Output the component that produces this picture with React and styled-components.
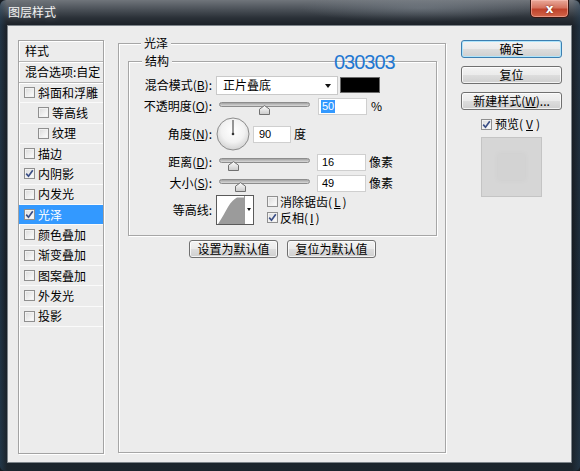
import React from "react";
import styled, { createGlobalStyle } from "styled-components";

const GlobalStyle = createGlobalStyle`
  html, body { margin: 0; padding: 0; background: #161b21; }
  body { width: 580px; height: 471px; overflow: hidden; }
  * { box-sizing: border-box; }
`;

const FONT = `"Noto Sans CJK SC", "Noto Sans", sans-serif`;

const Window = styled.div`
  width: 580px;
  height: 471px;
  display: flex;
  flex-direction: column;
  border-radius: 6px 6px 5px 5px;
  overflow: hidden;
  background:
    linear-gradient(90deg, rgba(40,70,95,0.55) 0px, rgba(0,0,0,0) 7px, rgba(0,0,0,0) 572px, rgba(40,70,95,0.45) 580px),
    linear-gradient(180deg, #70757b 0px, #50565d 8px, #2a3037 18px, #1b2027 26px, #161b21 60%, #1c252d 100%);
  font-family: ${FONT};
  font-size: 12px;
  color: #000;
`;

const TitleBar = styled.div`
  height: 25px;
  display: flex;
  align-items: flex-start;
  padding: 0 11px 0 8px;
  background: radial-gradient(ellipse 120px 14px at 420px 8px, rgba(150,160,170,0.35), rgba(0,0,0,0));
`;

const Title = styled.div`
  margin-top: 5px;
  color: #f4f4f4;
  font-size: 12px;
  line-height: 14px;
  text-shadow: 0 0 6px rgba(255,255,255,0.35);
`;

const CloseButton = styled.div`
  margin-left: auto;
  width: 39px;
  height: 18px;
  border: 1px solid #3a1712;
  border-top: none;
  border-radius: 0 0 5px 5px;
  background: linear-gradient(180deg, #e9a99a 0%, #d5735f 45%, #c0432c 55%, #d3664a 100%);
  box-shadow: inset 0 0 0 1px rgba(255,200,190,0.5);
  display: flex;
  align-items: center;
  justify-content: center;
  color: #fff;
  font-family: "DejaVu Sans", sans-serif;
  font-weight: bold;
  font-size: 12px;
  text-shadow: 0 0 2px #5a1a10;
`;

const Client = styled.div`
  flex: 1;
  margin: 0 8px 8px 7px;
  border: 1px solid #7d848a;
  background: #ececec;
  display: flex;
  padding: 14px 9px 8px 10px;
`;

/* ---------- left style list ---------- */
const StyleList = styled.div`
  width: 86px;
  flex: none;
  border: 1px solid #a3a3a3;
  box-shadow: 1px 1px 0 #fff, inset 1px 1px 0 #fff;
  display: flex;
  flex-direction: column;
`;

const ListHeader = styled.div`
  height: 21px;
  padding-left: 6px;
  display: flex;
  align-items: center;
  border-bottom: 1px solid #b5b5b5;
  box-shadow: 0 1px 0 #fff;
  white-space: nowrap;
  line-height: 14px;
`;

const ListItem = styled.div`
  height: 20.33px;
  display: flex;
  align-items: center;
  gap: 3px;
  padding-left: ${(p) => (p.$indent ? 19 : 5)}px;
  border-bottom: 1px solid #fafafa;
  background: ${(p) => (p.$active ? "#3399ff" : "transparent")};
  color: ${(p) => (p.$active ? "#fff" : "#000")};
  white-space: nowrap;
  line-height: 14px;
`;

const Box = styled.span`
  width: 11px;
  height: 11px;
  flex: none;
  border: 1px solid #8f8f8f;
  background: linear-gradient(135deg, #dadada 0%, #f4f4f4 70%, #ffffff 100%);
  box-shadow: inset 0 0 0 1px #f2f2f2;
  display: flex;
  align-items: center;
  justify-content: center;
`;

const Check = ({ on }) => (
  <Box>
    {on && (
      <svg width="9" height="9" viewBox="0 0 9 9">
        <path d="M1.2 4.6 L3.5 7.2 L7.8 1.2" fill="none" stroke="#3b4f86" strokeWidth="1.7" />
      </svg>
    )}
  </Box>
);

/* ---------- group boxes ---------- */
const GroupBox = styled.div`
  position: relative;
  border: 1px solid #a6a6a6;
  box-shadow: 1px 1px 0 #fff, inset 1px 1px 0 #fff;
  display: flex;
  flex-direction: column;
`;

const OuterGroup = styled(GroupBox)`
  width: 328px;
  flex: none;
  margin: 3px 15px 1px 14px;
  padding: 0 8px 0 9px;
`;

const InnerGroup = styled(GroupBox)`
  margin-top: 11px;
  padding: 0 0 10px 0;
`;

const Legend = styled.div`
  align-self: flex-start;
  margin: -8px 0 0 13px;
  padding: 0 3px;
  background: #ececec;
  line-height: 14px;
  height: 14px;
`;

const Annotation = styled.div`
  position: absolute;
  z-index: 2;
  left: 215px;
  top: 8px;
  font-family: "Liberation Sans", Arial, sans-serif;
  font-size: 20px;
  line-height: 20px;
  letter-spacing: -1px;
  color: #1f78d2;
`;

const FormGrid = styled.div`
  display: grid;
  grid-template-columns: 83px 1fr;
  grid-template-rows: 20px 20px 34px 20px 20px 31px;
  column-gap: 4px;
  row-gap: 1px;
  margin-top: 7px;
`;

const Label = styled.div`
  display: flex;
  align-items: center;
  justify-content: flex-end;
  white-space: nowrap;
  line-height: 14px;
`;

const Controls = styled.div`
  display: flex;
  align-items: center;
  gap: ${(p) => p.$gap ?? 4}px;
  white-space: nowrap;
  line-height: 14px;
`;

const Select = styled.div`
  width: 122px;
  height: 19px;
  background: #fff;
  border: 1px solid #c9c9c9;
  display: flex;
  align-items: center;
  padding: 0 6px 0 6px;
  justify-content: space-between;
`;

const Arrow = styled.span`
  width: 0;
  height: 0;
  border-left: 3.5px solid transparent;
  border-right: 3.5px solid transparent;
  border-top: 4px solid #111;
  margin-top: 1px;
`;

const Swatch = styled.div`
  width: 40px;
  height: 16px;
  background: #000;
  border: 1px solid #6a6a6a;
  margin-left: -1px;
`;

const Field = styled.div`
  width: ${(p) => p.$w}px;
  height: 17px;
  background: #fff;
  border: 1px solid #cfcfcf;
  display: flex;
  align-items: center;
  padding-left: ${(p) => p.$pad ?? 3}px;
  font-size: 11px;
  font-family: "Liberation Sans", Arial, sans-serif;
`;

const Selected = styled.span`
  background: #3399ff;
  color: #fff;
  padding: 0 1px;
  line-height: 13px;
`;

const SliderBox = styled.div`
  position: relative;
  width: 98px;
  height: 20px;
  padding: 6px 4px 0 3px;
  flex: none;
`;

const Track = styled.div`
  height: 5px;
  border-radius: 3px;
  border: 1px solid #8d8d8d;
  background: linear-gradient(180deg, #a3a3a3, #d9d9d9);
`;

const Thumb = styled.svg`
  position: absolute;
  top: 9px;
  margin-left: -5.5px;
`;

const Slider = ({ at }) => (
  <SliderBox>
    <Track />
    <Thumb width="11" height="10" viewBox="0 0 11 10" style={{ left: `${3 + at * 91}px` }}>
      <defs>
        <linearGradient id="tg" x1="0" y1="0" x2="0" y2="1">
          <stop offset="0" stopColor="#ffffff" />
          <stop offset="1" stopColor="#c9c9c9" />
        </linearGradient>
      </defs>
      <polygon points="0.5,9.5 0.5,4.2 5.5,0.6 10.5,4.2 10.5,9.5" fill="url(#tg)" stroke="#707070" />
    </Thumb>
  </SliderBox>
);

const Dial = () => (
  <svg width="34" height="34" viewBox="0 0 34 34">
    <defs>
      <radialGradient id="dg" cx="0.5" cy="0.4" r="0.6">
        <stop offset="0" stopColor="#ffffff" />
        <stop offset="0.6" stopColor="#f2f2f2" />
        <stop offset="1" stopColor="#d2d2d2" />
      </radialGradient>
    </defs>
    <circle cx="17" cy="17" r="16" fill="url(#dg)" stroke="#8c8c8c" />
    <line x1="17" y1="17" x2="17" y2="3" stroke="#333" strokeWidth="1" />
    <circle cx="17" cy="17" r="1.3" fill="#333" />
  </svg>
);

const Contour = styled.div`
  width: 38px;
  height: 30px;
  border: 1px solid #5a5a5a;
  background: #fff;
  display: flex;
  flex: none;
`;

const ContourDrop = styled.div`
  width: 9px;
  border-left: 1px solid #9a9a9a;
  display: flex;
  align-items: center;
  justify-content: center;
  background: #fff;
`;

const SmallArrow = styled.span`
  width: 0;
  height: 0;
  border-left: 2.5px solid transparent;
  border-right: 2.5px solid transparent;
  border-top: 3px solid #111;
`;

const CheckColumn = styled.div`
  display: flex;
  flex-direction: column;
  gap: 1px;
`;

const CheckRow = styled.div`
  display: flex;
  align-items: center;
  gap: 2px;
  height: 15px;
  white-space: nowrap;
  line-height: 14px;
`;

const ButtonRow = styled.div`
  display: flex;
  justify-content: center;
  gap: 9px;
  margin-top: 4px;
`;

const Button = styled.div`
  width: ${(p) => p.$w}px;
  height: 18px;
  border: 1px solid ${(p) => (p.$default ? "#3c7fb1" : "#707070")};
  border-radius: 3px;
  background: linear-gradient(180deg, #f3f3f3 0%, #ebebeb 48%, #dddddd 52%, #cfcfcf 100%);
  box-shadow: inset 0 0 0 1px ${(p) => (p.$default ? "#aee4fb" : "rgba(255,255,255,0.75)")};
  display: flex;
  align-items: center;
  justify-content: center;
  white-space: nowrap;
  line-height: 14px;
  font-size: 12px;
`;

const SideColumn = styled.div`
  width: 101px;
  flex: none;
  display: flex;
  flex-direction: column;
  gap: 8px;
`;

const PreviewCheck = styled.div`
  display: flex;
  align-items: center;
  gap: 3px;
  height: 14px;
  margin: -1px 0 0 20px;
  white-space: nowrap;
  line-height: 14px;
`;

const PreviewBox = styled.div`
  width: 61px;
  height: 60px;
  margin: -2px 0 0 20px;
  background: #d6d6d6;
  border: 1px solid #c4c4c4;
  display: flex;
  align-items: center;
  justify-content: center;
`;

const PreviewInner = styled.div`
  width: 27px;
  height: 26px;
  background: #d3d3d3;
  box-shadow: 0 0 3px rgba(205,205,205,0.8);
`;

const items = [
  { t: "斜面和浮雕" },
  { t: "等高线", indent: true },
  { t: "纹理", indent: true },
  { t: "描边" },
  { t: "内阴影", on: true },
  { t: "内发光" },
  { t: "光泽", on: true, active: true },
  { t: "颜色叠加" },
  { t: "渐变叠加" },
  { t: "图案叠加" },
  { t: "外发光" },
  { t: "投影" },
];

export default function App() {
  return (
    <>
      <GlobalStyle />
      <Window>
        <TitleBar>
          <Title>图层样式</Title>
          <CloseButton>x</CloseButton>
        </TitleBar>
        <Client>
          <StyleList>
            <ListHeader>样式</ListHeader>
            <ListHeader>混合选项:自定</ListHeader>
            {items.map((it) => (
              <ListItem key={it.t} $indent={it.indent} $active={it.active}>
                <Check on={it.on} />
                {it.t}
              </ListItem>
            ))}
          </StyleList>

          <OuterGroup>
            <Legend>光泽</Legend>
            <Annotation>030303</Annotation>
            <InnerGroup>
              <Legend>结构</Legend>
              <FormGrid>
                <Label>混合模式(<u>B</u>):</Label>
                <Controls $gap={3}>
                  <Select>
                    正片叠底
                    <Arrow />
                  </Select>
                  <Swatch />
                </Controls>

                <Label>不透明度(<u>O</u>):</Label>
                <Controls>
                  <Slider at={0.5} />
                  <Field $w={49} $pad={2}>
                    <Selected>50</Selected>
                  </Field>
                  %
                </Controls>

                <Label>角度(<u>N</u>):</Label>
                <Controls $gap={3}>
                  <Dial />
                  <Field $w={38} $pad={5}>90</Field>
                  度
                </Controls>

                <Label>距离(<u>D</u>):</Label>
                <Controls $gap={3}>
                  <Slider at={0.155} />
                  <Field $w={49} $pad={4}>16</Field>
                  像素
                </Controls>

                <Label>大小(<u>S</u>):</Label>
                <Controls $gap={3}>
                  <Slider at={0.24} />
                  <Field $w={49} $pad={4}>49</Field>
                  像素
                </Controls>

                <Label>等高线:</Label>
                <Controls $gap={13}>
                  <Contour>
                    <svg width="27" height="28" viewBox="0 0 27 28">
                      <path d="M1 28 C 5 22, 8 16, 11 11 C 14 6, 17 3, 20 1.5 L 27 1.5 L 27 28 Z" fill="#9b9b9b" />
                    </svg>
                    <ContourDrop>
                      <SmallArrow />
                    </ContourDrop>
                  </Contour>
                  <CheckColumn>
                    <CheckRow>
                      <Check />
                      消除锯齿(<u>L</u>)
                    </CheckRow>
                    <CheckRow>
                      <Check on />
                      反相(<u>I</u>)
                    </CheckRow>
                  </CheckColumn>
                </Controls>
              </FormGrid>
            </InnerGroup>
            <ButtonRow>
              <Button $w={89}>设置为默认值</Button>
              <Button $w={89}>复位为默认值</Button>
            </ButtonRow>
          </OuterGroup>

          <SideColumn>
            <Button $w={101} $default>确定</Button>
            <Button $w={101}>复位</Button>
            <Button $w={101}>新建样式(<u>W</u>)...</Button>
            <PreviewCheck>
              <Check on />
              预览(<u>V</u>)
            </PreviewCheck>
            <PreviewBox>
              <PreviewInner />
            </PreviewBox>
          </SideColumn>
        </Client>
      </Window>
    </>
  );
}
